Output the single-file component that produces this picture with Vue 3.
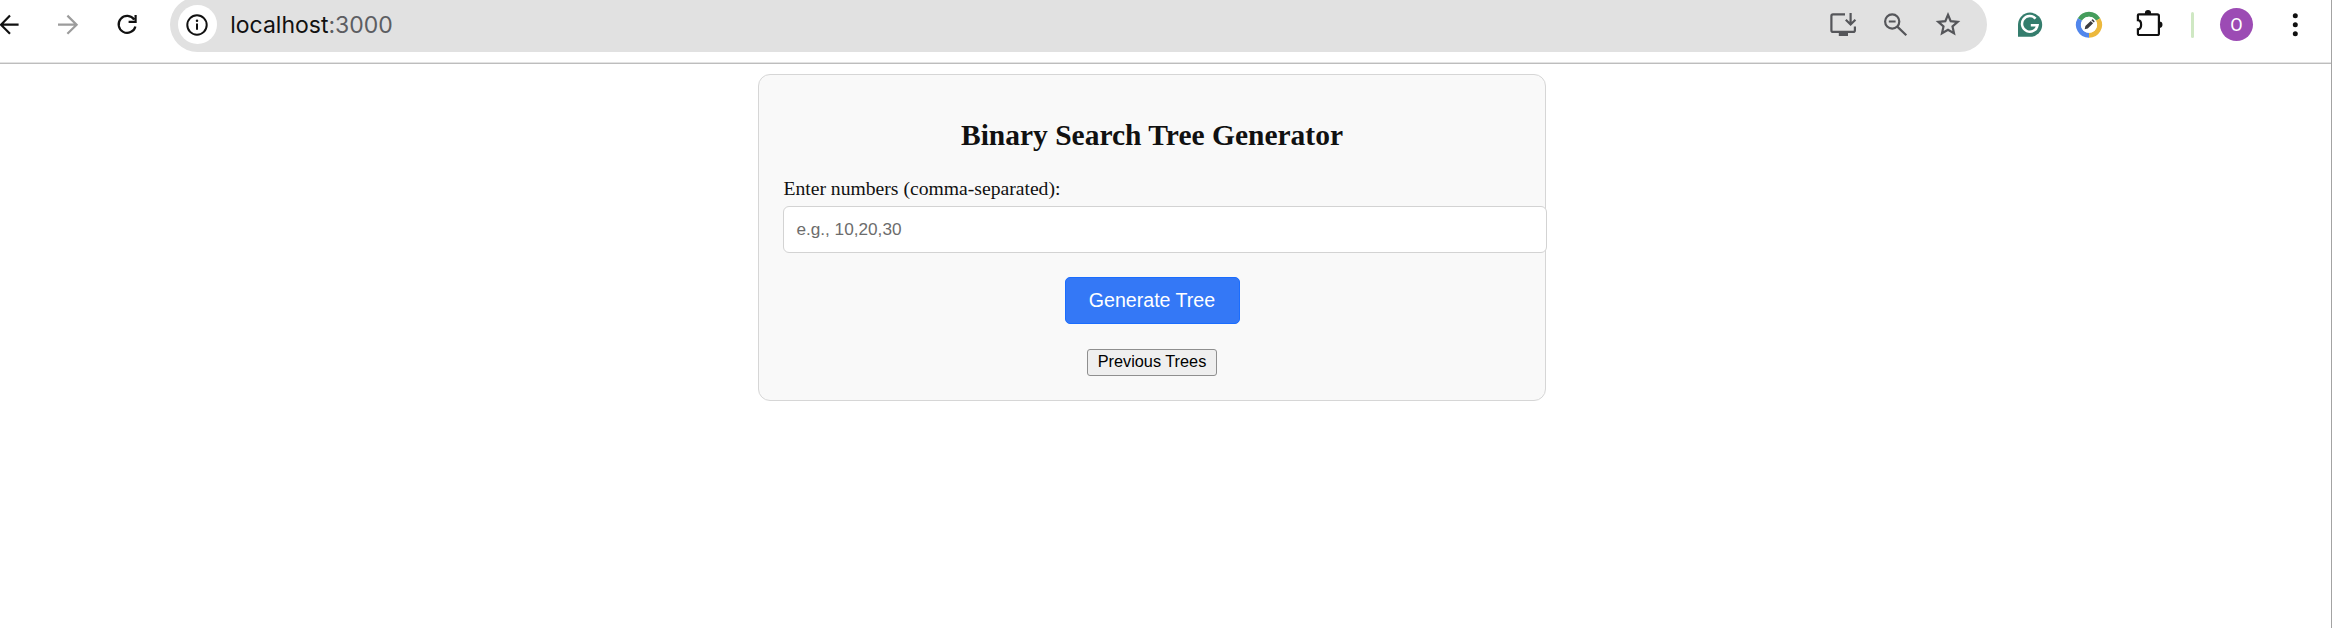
<script setup>
import { ref } from 'vue'

const numbers = ref('')
</script>

<template>
  <div class="window">
    <header class="toolbar">
      <nav class="nav">
        <svg width="40" height="50" viewBox="0 0 40 50" class="line dark">
          <path d="M18.6 24.7H1.6M10 15.6L1 24.7L10 33.8" />
        </svg>
        <svg width="60" height="50" viewBox="40 0 60 50" class="line muted">
          <path d="M58 24.7H76M67.4 15.6L76.6 24.7L67.4 33.8" />
        </svg>
        <svg width="70" height="50" viewBox="100 0 70 50" class="line dark">
          <path d="M134.2 19.6A8.5 8.5 0 1 0 135.4 26.4M135.6 15V21.8H128.6" />
        </svg>
      </nav>

      <div class="address">
        <span class="site-info">
          <svg width="22" height="22" viewBox="0 0 22 22">
            <circle cx="11" cy="11" r="9.7" fill="none" stroke="#111" stroke-width="2" />
            <circle cx="11" cy="6.7" r="1.25" fill="#111" />
            <path d="M11 9.5V15.8" stroke="#111" stroke-width="2" />
          </svg>
        </span>
        <span class="url">localhost<span class="port">:3000</span></span>
        <span class="actions">
          <svg width="50" height="50" viewBox="1820 0 50 50" class="line grey">
            <path d="M1845 14.3H1833Q1831.4 14.3 1831.4 16V30.2Q1831.4 31.9 1833 31.9H1853.2Q1854.9 31.9 1854.9 30.2V26.6" />
            <path d="M1850.6 13V24M1845.8 19.7L1850.6 24.5L1855.4 19.7" />
            <path d="M1838.8 34.2H1848" stroke-width="3.6" />
          </svg>
          <svg width="50" height="50" viewBox="1870 0 50 50" class="line grey">
            <circle cx="1892.2" cy="21.5" r="7.1" />
            <path d="M1888.8 21.5H1895.6M1897.3 26.6L1906.3 35.3" />
          </svg>
          <svg width="67" height="50" viewBox="1920 0 67 50" class="line grey">
            <path d="M1948 14.8L1950.7 21.2L1957.7 21.9L1952.5 26.5L1954 33.3L1948 29.7L1942 33.3L1943.5 26.5L1938.3 21.9L1945.3 21.2Z" />
          </svg>
        </span>
      </div>

      <div class="extensions">
        <svg width="68" height="50" viewBox="1987 0 68 50">
          <path d="M2018 36.8V24.7A12.1 12.1 0 1 1 2030.1 36.8Z" fill="#347d6d" />
          <path d="M2035.6 18.6A7.8 7.8 0 1 0 2037.5 25.3H2030.8M2037.5 25.3L2035.7 29.8" fill="none" stroke="#fff" stroke-width="2.5" />
        </svg>
        <svg width="65" height="50" viewBox="2055 0 65 50">
          <g fill="none" stroke-width="5">
            <path d="M2079.9 19.5A10.5 10.5 0 0 1 2098.1 19.5" stroke="#459d5c" />
            <path d="M2098.1 19.5A10.5 10.5 0 0 1 2089 35.3" stroke="#ecb83d" />
            <path d="M2089 35.3A10.5 10.5 0 0 1 2079.9 19.5" stroke="#5186ec" />
          </g>
          <circle cx="2089" cy="24.8" r="8" fill="#fff" />
          <path d="M2084.7 29.2L2085.4 26.1L2090.7 20.9L2093.1 23.3L2087.8 28.5ZM2091.4 20.2L2092.1 19.5Q2092.6 19.1 2093.1 19.6L2094.4 20.9Q2094.8 21.4 2094.4 21.9L2093.8 22.6Z" fill="#3c3c40" />
        </svg>
        <svg width="57" height="50" viewBox="2120 0 57 50">
          <path d="M2138.8 14.3H2157.3Q2158.9 14.3 2158.9 15.9V33.4Q2158.9 35 2157.3 35H2139.5Q2137.9 35 2137.9 33.4V29.3C2142.2 29 2142.2 20.6 2137.9 20.2V15.2Q2137.9 14.3 2138.8 14.3Z" fill="none" stroke="#111" stroke-width="2.2" />
          <path d="M2144.9 14.4V13.2A3.1 3.1 0 0 1 2151.1 13.2V14.4ZM2158.5 21.6H2159.4A3.1 3.1 0 0 1 2159.4 27.8H2158.5Z" fill="#111" />
        </svg>
        <span class="divider"></span>
        <span class="avatar">O</span>
        <svg width="78" height="50" viewBox="2253 0 78 50" fill="#111">
          <circle cx="2295.3" cy="15.8" r="2.5" />
          <circle cx="2295.3" cy="24.8" r="2.5" />
          <circle cx="2295.3" cy="33.8" r="2.5" />
        </svg>
      </div>
    </header>

    <main class="page">
      <form class="card" @submit.prevent>
        <h2>Binary Search Tree Generator</h2>
        <label for="numbers">Enter numbers (comma-separated):</label>
        <input id="numbers" v-model="numbers" type="text" placeholder="e.g., 10,20,30" />
        <button class="generate" type="submit">Generate Tree</button>
        <button class="previous" type="button">Previous Trees</button>
      </form>
    </main>
  </div>
</template>

<style>
body {
  margin: 0;
  background: #fff;
}
</style>

<style scoped>
.window {
  box-sizing: border-box;
  width: 2332px;
  height: 628px;
  overflow: hidden;
  background: #fff;
  border-right: 1px solid #a3a3a3;
}
.toolbar {
  box-sizing: border-box;
  display: flex;
  height: 64px;
  background: #fff;
  border-bottom: 1px solid #bdbdbd;
  box-shadow: inset 0 -1px #e3e3e3;
}
svg {
  display: block;
  flex: none;
}
.nav,
.extensions,
.actions {
  display: flex;
  flex: none;
  height: 50px;
}
.line {
  fill: none;
  stroke-width: 2.2;
}
.dark {
  stroke: #111;
}
.muted {
  stroke: #9c9c9c;
}
.grey {
  stroke: #55565a;
}
.address {
  box-sizing: border-box;
  display: flex;
  flex: 1;
  height: 55px;
  margin-top: -3px;
  padding: 3px 0 0 7.5px;
  background: #e1e1e1;
  border-radius: 28px;
}
.site-info {
  display: flex;
  align-items: center;
  justify-content: center;
  width: 39px;
  height: 39px;
  margin-top: 5px;
  background: #fff;
  border-radius: 50%;
}
.url {
  margin-left: 13.8px;
  font: 23px/50px Inter, sans-serif;
  letter-spacing: -0.02px;
  color: #111;
}
.port {
  color: #5c5d61;
}
.actions {
  margin-left: auto;
}
.divider {
  width: 3.5px;
  height: 26px;
  margin: 12px 26px 0 13.5px;
  background: #cfe8c3;
  border-radius: 2px;
}
.avatar {
  width: 33px;
  height: 33px;
  margin-top: 8px;
  font: 18px/33px Roboto, sans-serif;
  color: #fff;
  text-align: center;
  background: #9c4bb4;
  border-radius: 50%;
}
.page {
  display: flex;
  padding: 10px 0 0 758px;
}
.card {
  box-sizing: border-box;
  display: flex;
  flex-direction: column;
  align-items: center;
  width: 788px;
  height: 327px;
  padding: 0 24.4px;
  background: #f9f9f9;
  border: 1px solid #d6d6d6;
  border-radius: 12px;
}
h2 {
  margin: 43px 0 0;
  font: bold 29.5px/34px "Liberation Serif", serif;
  color: #111;
}
label {
  align-self: flex-start;
  margin-top: 25px;
  font: 19.65px/23px "Liberation Serif", serif;
  color: #111;
}
input {
  box-sizing: border-box;
  align-self: flex-start;
  flex: none;
  width: 763.5px;
  height: 47px;
  margin: 6px 0 0;
  padding: 0 12px;
  font: 17.2px "Liberation Sans", sans-serif;
  color: #111;
  background: #fff;
  border: 1px solid #d3d3d3;
  border-radius: 6px;
  outline: none;
}
input::placeholder {
  color: #6c6c6c;
}
button {
  box-sizing: border-box;
  flex: none;
  padding: 0;
  font-family: "Liberation Sans", sans-serif;
}
.generate {
  width: 175px;
  height: 47px;
  margin-top: 24px;
  font-size: 19.6px;
  color: #fff;
  background: #3478f6;
  border: 1px solid #1a6dff;
  border-radius: 5px;
}
.previous {
  width: 130px;
  height: 27px;
  margin-top: 25px;
  padding-bottom: 2px;
  font-size: 16.3px;
  color: #000;
  background: #efefef;
  border: 1px solid #8f8f8f;
  border-radius: 3px;
}
</style>
